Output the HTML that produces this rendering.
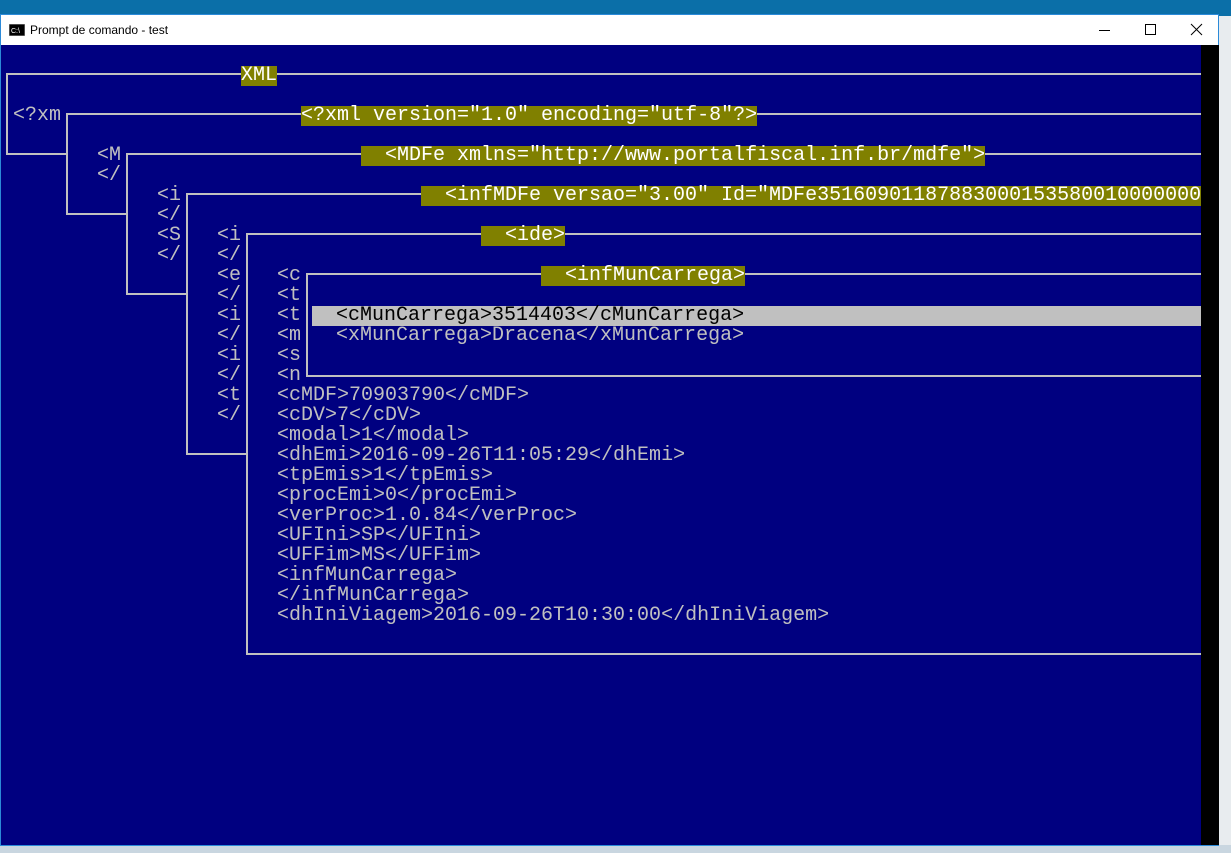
<!DOCTYPE html>
<html><head><meta charset="utf-8"><style>
*{margin:0;padding:0;box-sizing:border-box}
body{width:1231px;height:853px;overflow:hidden;position:relative;background:#c9d6e0;font-family:"Liberation Sans",sans-serif}
#desk{position:absolute;left:0;top:0;width:1231px;height:16px;background:#0b6fa8}
#rside{position:absolute;left:1219px;top:16px;width:12px;height:829px;background:#e8ecef}
#win{position:absolute;left:0;top:14px;width:1219px;height:832px;background:#fff;border:1px solid #2b8ad8}
#title{position:absolute;left:0;top:0;width:1217px;height:30px;background:#fff}
#title .t{position:absolute;left:29px;top:8px;font-size:12px;color:#000}
#con{position:absolute;left:0px;top:30px;width:1200px;height:800px;background:#000080;overflow:hidden}
#in{position:absolute;left:-1px;top:0;width:1201px;height:800px}
#blk{position:absolute;left:1200px;top:30px;width:18px;height:800px;background:#000}
.b{position:absolute;border-top:2px solid #c0c0c0;border-left:2px solid #c0c0c0;border-bottom:2px solid #c0c0c0;background:#000080;width:1400px}
.x{position:absolute;font-family:"Liberation Mono",monospace;font-size:20px;line-height:20px;color:#c0c0c0;white-space:pre;margin-top:2px}
.l{background:#808000;color:#fff}
.h{background:#c0c0c0;color:#000;width:1000px}
</style></head><body>
<div id="desk"></div>
<div id="rside"></div>
<div id="win">
<div id="title">
<svg style="position:absolute;left:8px;top:9px" width="16" height="12"><rect x="0" y="0" width="16" height="12" fill="#000" stroke="#999"/><text x="2" y="9" font-size="7" fill="#fff" font-family="Liberation Sans">C:\</text></svg>
<span class="t">Prompt de comando - test</span>
<svg style="position:absolute;left:1096px;top:8px" width="110" height="14"><line x1="2" y1="7.5" x2="13" y2="7.5" stroke="#000"/><rect x="48.5" y="1.5" width="10" height="10" fill="none" stroke="#000"/><path d="M94 1L105 12M105 1L94 12" stroke="#000"/></svg>
</div>
<div id="con"><div id="in">
<div class="b" style="left:6px;top:28px;height:82px"></div>
<div class="x l" style="left:241px;top:19px">XML</div>
<div class="x" style="left:13px;top:59px">&lt;?xm</div>
<div class="b" style="left:66px;top:68px;height:102px"></div>
<div class="x l" style="left:301px;top:59px">&lt;?xml version="1.0" encoding="utf-8"?&gt;</div>
<div class="x" style="left:97px;top:99px">&lt;M
&lt;/</div>
<div class="b" style="left:126px;top:108px;height:142px"></div>
<div class="x l" style="left:361px;top:99px">  &lt;MDFe xmlns="http://www.portalfiscal.inf.br/mdfe"&gt;</div>
<div class="x" style="left:157px;top:139px">&lt;i
&lt;/
&lt;S
&lt;/</div>
<div class="b" style="left:186px;top:148px;height:262px"></div>
<div class="x l" style="left:421px;top:139px">  &lt;infMDFe versao="3.00" Id="MDFe35160901187883000153580010000000</div>
<div class="x" style="left:217px;top:179px">&lt;i
&lt;/
&lt;e
&lt;/
&lt;i
&lt;/
&lt;i
&lt;/
&lt;t
&lt;/</div>
<div class="b" style="left:246px;top:188px;height:422px"></div>
<div class="x l" style="left:481px;top:179px">  &lt;ide&gt;</div>
<div class="x" style="left:277px;top:219px">&lt;c
&lt;t
&lt;t
&lt;m
&lt;s
&lt;n
&lt;cMDF&gt;70903790&lt;/cMDF&gt;
&lt;cDV&gt;7&lt;/cDV&gt;
&lt;modal&gt;1&lt;/modal&gt;
&lt;dhEmi&gt;2016-09-26T11:05:29&lt;/dhEmi&gt;
&lt;tpEmis&gt;1&lt;/tpEmis&gt;
&lt;procEmi&gt;0&lt;/procEmi&gt;
&lt;verProc&gt;1.0.84&lt;/verProc&gt;
&lt;UFIni&gt;SP&lt;/UFIni&gt;
&lt;UFFim&gt;MS&lt;/UFFim&gt;
&lt;infMunCarrega&gt;
&lt;/infMunCarrega&gt;
&lt;dhIniViagem&gt;2016-09-26T10:30:00&lt;/dhIniViagem&gt;</div>
<div class="b" style="left:306px;top:228px;height:104px"></div>
<div class="x l" style="left:541px;top:219px">  &lt;infMunCarrega&gt;</div>
<div class="x h" style="left:312px;top:259px">  &lt;cMunCarrega&gt;3514403&lt;/cMunCarrega&gt;</div>
<div class="x" style="left:312px;top:279px">  &lt;xMunCarrega&gt;Dracena&lt;/xMunCarrega&gt;</div>
</div></div>
<div id="blk"></div>
</div>
</body></html>
